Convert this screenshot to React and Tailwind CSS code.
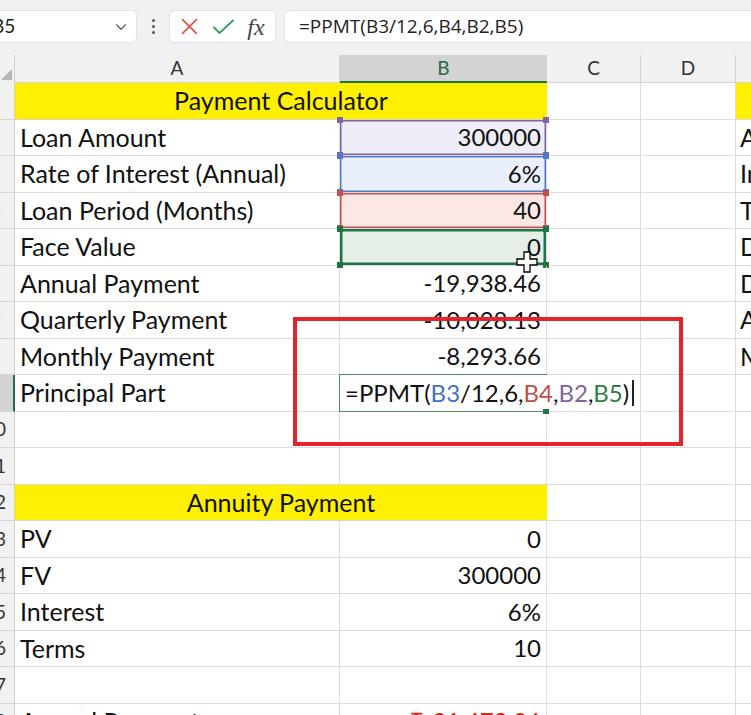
import { ChevronDown } from 'lucide-react'

const FONT = { fontFamily: 'Lato, "Open Sans", sans-serif' }

const COLS = [
  { key: 'A', w: 'w-[325px]' },
  { key: 'B', w: 'w-[207px]' },
  { key: 'C', w: 'w-[94px]' },
  { key: 'D', w: 'w-[95px]' },
  { key: 'E', w: 'w-[60px]' },
]

const ROWS = [
  { n: 1, title: 'Payment Calculator', e: '' },
  { n: 2, a: 'Loan Amount', b: '300000', e: 'A', range: 'purple' },
  { n: 3, a: 'Rate of Interest (Annual)', b: '6%', e: 'In', range: 'blue' },
  { n: 4, a: 'Loan Period (Months)', b: '40', e: 'T', range: 'red' },
  { n: 5, a: 'Face Value', b: '0', e: 'D', range: 'green' },
  { n: 6, a: 'Annual Payment', b: '-19,938.46', e: 'D' },
  { n: 7, a: 'Quarterly Payment', b: '-10,028.13', e: 'A' },
  { n: 8, a: 'Monthly Payment', b: '-8,293.66', e: 'M' },
  { n: 9, a: 'Principal Part', edit: true },
  { n: 10 },
  { n: 11 },
  { n: 12, title: 'Annuity Payment' },
  { n: 13, a: 'PV', b: '0' },
  { n: 14, a: 'FV', b: '300000' },
  { n: 15, a: 'Interest', b: '6%' },
  { n: 16, a: 'Terms', b: '10' },
  { n: 17 },
  { n: 18, a: 'Annual Payment', b: '₹-21,473.06', red: true },
]

const RANGE = {
  purple: { fill: 'bg-[#efedf8]', ring: 'shadow-[inset_0_0_0_1.5px_#8064a2]', dot: 'bg-[#8064a2]' },
  blue: { fill: 'bg-[#eaf0fb]', ring: 'shadow-[inset_0_0_0_1.5px_#4f7ac7]', dot: 'bg-[#4f7ac7]' },
  red: { fill: 'bg-[#fbe8e6]', ring: 'shadow-[inset_0_0_0_1.5px_#c0504d]', dot: 'bg-[#c0504d]' },
  green: { fill: 'bg-[#e4efe6]', ring: 'shadow-[inset_0_0_0_2.5px_#217346]', dot: 'bg-[#217346]' },
}

function Dots({ color }) {
  return (
    <>
      <span className={`absolute -left-[3px] -top-[3px] w-[6px] h-[6px] ${color}`} />
      <span className={`absolute -right-[3px] -top-[3px] w-[6px] h-[6px] ${color}`} />
      <span className={`absolute -left-[3px] -bottom-[3px] w-[6px] h-[6px] ${color}`} />
      <span className={`absolute -right-[3px] -bottom-[3px] w-[6px] h-[6px] ${color}`} />
    </>
  )
}

function FormulaBar() {
  return (
    <div className="h-[55px] bg-[#f1f1f1] flex items-start pt-[10px]">
      <div className="ml-[-17px] w-[154px] h-[33px] bg-white rounded-md border border-[#e3e3e3] flex items-center pl-[8px] pr-[6px] text-[19px] text-[#222]">
        <span className="flex-1">B5</span>
        <ChevronDown className="w-[18px] h-[18px] text-[#555]" strokeWidth={1.5} />
      </div>
      <div className="w-[32px] h-[33px] flex flex-col items-center justify-center gap-[3px]">
        <span className="w-[3px] h-[3px] bg-[#555] rounded-full" />
        <span className="w-[3px] h-[3px] bg-[#555] rounded-full" />
        <span className="w-[3px] h-[3px] bg-[#555] rounded-full" />
      </div>
      <div className="w-[107px] h-[33px] bg-white rounded-md border border-[#e3e3e3] flex items-center justify-around px-[4px]">
        <svg width="19" height="19" viewBox="0 0 18 18" fill="none" stroke="#e0524c" strokeWidth="1.6">
          <path d="M2 2l14 14M16 2L2 16" />
        </svg>
        <svg width="23" height="18" viewBox="0 0 22 18" fill="none" stroke="#3f9a62" strokeWidth="1.8">
          <path d="M1 9l6 6L21 2" />
        </svg>
        <span className="text-[24px] leading-none italic text-[#444]" style={{ fontFamily: '"Liberation Serif", serif' }}>
          fx
        </span>
      </div>
      <div className="ml-[8px] flex-1 h-[33px] bg-white rounded-l-md border border-r-0 border-[#e3e3e3] flex items-center pl-[14px] text-[19px] text-[#222]" style={{ fontFamily: '"Open Sans", sans-serif' }}>
        =PPMT(B3/12,6,B4,B2,B5)
      </div>
    </div>
  )
}

function ColumnHeader() {
  return (
    <div className="flex h-[28px] bg-[#f1f1f1] text-[19px] text-[#333]">
      <div className="w-[15px] shrink-0 relative border-r border-[#cfcfcf]">
        <div className="absolute right-[2px] bottom-[3px] w-0 h-0 border-l-[11px] border-l-transparent border-b-[11px] border-b-[#b5b5b5]" />
      </div>
      {COLS.map((c) => (
        <div
          key={c.key}
          className={`${c.w} shrink-0 flex items-center justify-center ${
            c.key === 'B'
              ? 'bg-[#d3d3d3] text-[#1f6b45] border-b-2 border-[#217346]'
              : 'border-r border-[#d4d4d4] border-b border-b-[#d4d4d4]'
          }`}
        >
          {c.key === 'E' ? '' : c.key}
        </div>
      ))}
    </div>
  )
}

function Row({ r }) {
  const rg = r.range ? RANGE[r.range] : null
  return (
    <div className="flex h-[36.5px] text-[25px] text-[#111]">
      <div
        className={`w-[15px] shrink-0 overflow-hidden border-b border-[#d4d4d4] ${
          r.n === 9 ? 'bg-[#d3d3d3] border-r-2 border-r-[#217346]' : 'bg-[#f1f1f1] border-r border-r-[#cfcfcf]'
        }`}
      >
        <div className="w-[40px] ml-[-25px] h-full flex items-center justify-center text-[19px] text-[#333]">{r.n}</div>
      </div>
      {r.title ? (
        <div className="w-[532px] shrink-0 bg-[#ffef00] flex items-center justify-center border-b border-[#d4d4d4]">
          {r.title}
        </div>
      ) : (
        <>
          <div className="w-[325px] shrink-0 border-r border-b border-[#dcdcdc] flex items-center pl-[5px] whitespace-nowrap overflow-hidden">
            {r.a}
          </div>
          {r.edit ? (
            <div className="w-[207px] shrink-0 relative z-10 border-b border-[#dcdcdc] flex items-center pl-[5px] whitespace-nowrap text-[24px]">
              <span className="bg-white">
                =PPMT(<span className="text-[#4472c4]">B3</span>/12,6,
                <span className="text-[#c0504d]">B4</span>,<span className="text-[#8064a2]">B2</span>,
                <span className="text-[#2e7d4a]">B5</span>)
              </span>
              <span className="ml-[3px] w-[2px] h-[26px] shrink-0 bg-[#222]" />
              <span className="absolute -left-px -top-px -bottom-px right-0 border border-r-0 border-[#4e8a64] pointer-events-none" />
              <span className="absolute left-[203px] -bottom-[3px] w-[6px] h-[5px] bg-[#217346]" />
            </div>
          ) : (
            <div
              className={`w-[207px] shrink-0 relative border-r border-b border-[#dcdcdc] flex items-center justify-end pr-[5px] whitespace-nowrap text-[24px] ${
                rg ? `${rg.fill} ${rg.ring}` : ''
              } ${r.red ? 'text-[#e02020]' : ''}`}
            >
              {r.b}
              {rg && <Dots color={rg.dot} />}
            </div>
          )}
        </>
      )}
      <div className={`w-[94px] shrink-0 border-r border-b border-[#dcdcdc] ${r.edit ? 'bg-white' : ''}`} />
      <div className="w-[95px] shrink-0 border-r border-b border-[#dcdcdc]" />
      <div
        className={`w-[60px] shrink-0 border-b border-[#dcdcdc] flex items-center pl-[4px] ${
          r.n === 1 ? 'bg-[#ffef00]' : ''
        }`}
      >
        {r.e}
      </div>
    </div>
  )
}

export default function App() {
  return (
    <div className="relative w-[751px] h-[715px] overflow-hidden bg-white" style={FONT}>
      <FormulaBar />
      <ColumnHeader />
      <div>
        {ROWS.map((r) => (
          <Row key={r.n} r={r} />
        ))}
      </div>

      {/* red annotation box */}
      <div className="absolute left-[293px] top-[317px] w-[390px] h-[129px] border-[4px] border-[#e3242b] z-20 pointer-events-none" />

      {/* move cursor */}
      <svg className="absolute left-[516px] top-[251px] z-30" width="22" height="22" viewBox="0 0 22 22">
        <path
          d="M8 1h6v7h7v6h-7v7H8v-7H1V8h7z"
          fill="#fff"
          stroke="#000"
          strokeWidth="1.3"
        />
      </svg>
    </div>
  )
}
